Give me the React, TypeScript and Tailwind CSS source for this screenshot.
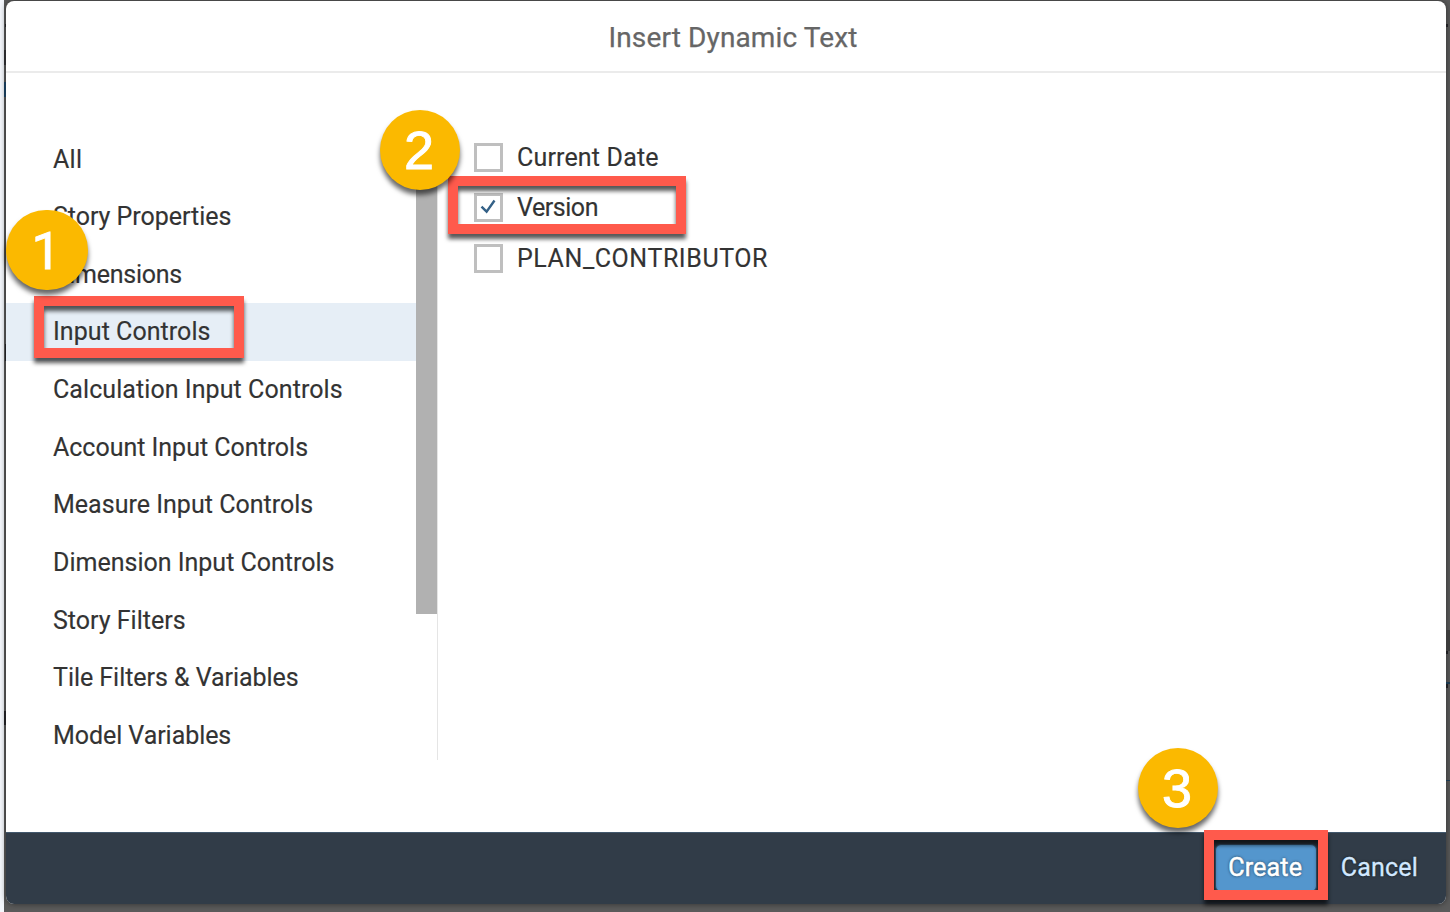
import type { ReactNode } from "react";

const categories = [
  { label: "All", tracking: "tracking-[0.3px]" },
  { label: "Story Properties", tracking: "tracking-[-0.03px]" },
  { label: "Dimensions", tracking: "tracking-[-0.25px]" },
  { label: "Input Controls", tracking: "tracking-[0.05px]", selected: true },
  { label: "Calculation Input Controls", tracking: "tracking-[0.07px]" },
  { label: "Account Input Controls", tracking: "tracking-[-0.02px]" },
  { label: "Measure Input Controls", tracking: "tracking-[0.02px]" },
  { label: "Dimension Input Controls", tracking: "tracking-[0px]" },
  { label: "Story Filters", tracking: "tracking-[0px]" },
  { label: "Tile Filters & Variables", tracking: "tracking-[-0.04px]" },
  { label: "Model Variables", tracking: "tracking-[-0.06px]" },
];

const options = [
  { label: "Current Date", tracking: "tracking-[0.17px]", gap: "mb-[21px]" },
  { label: "Version", tracking: "tracking-[-0.45px]", gap: "mb-[22px]", checked: true },
  { label: "PLAN_CONTRIBUTOR", tracking: "tracking-[0.57px]", gap: "mb-0" },
];

// Slivers of the dimmed page that show beside the dialog.
const slivers = [
  "top-[24px] left-[5px] h-[3px] w-px bg-[#1f1f22]",
  "top-[50px] left-[4px] h-[15px] w-[2px] bg-[#2a2a2d]",
  "top-[82px] left-[4px] h-[15px] w-[2px] bg-[#183a56]",
  "top-[344px] left-[5px] h-[17px] w-px bg-[#1f1f22]",
  "top-[711px] left-[4px] h-[14px] w-[2px] bg-[#1f1f22]",
  "top-[24px] left-[1446px] h-[3px] w-[2px] bg-[#1f1f22]",
  "top-[630px] left-[1446px] h-[21px] w-[4px] bg-[#3c3c3c]",
  "top-[651px] left-[1446px] h-[3px] w-[2px] bg-[#1f1f22]",
  "top-[682px] left-[1446px] h-[2px] w-[4px] bg-[#1c3a50]",
  "top-[684px] left-[1446px] h-[4px] w-[2px] bg-[#1f1f22]",
  "top-[780px] left-[1446px] h-px w-[4px] bg-[#1c3a50]",
];

function Step({ place, children }: { place: string; children: ReactNode }) {
  return (
    <div
      className={`absolute flex h-20 items-center justify-center rounded-full bg-[#fbb900] leading-none text-white shadow-[0_5px_5px_rgba(0,0,0,0.6)] ${place}`}
    >
      <span className="[-webkit-text-stroke:0.9px_white]">{children}</span>
    </div>
  );
}

function Highlight({ place }: { place: string }) {
  return (
    <div
      className={`pointer-events-none absolute border-[10px] border-[#ff5a4c] drop-shadow-[0_5px_2px_rgba(0,0,0,0.65)] ${place}`}
    />
  );
}

export default function App() {
  return (
    <div className="relative flex h-[912px] w-[1450px] overflow-hidden bg-[#f4f7fc] pl-1 font-['Roboto',sans-serif] text-[25px] text-[#333]">
      <div className="flex flex-1 bg-[#5b5b5b] pt-px pr-1 pb-2 pl-0.5">
        <div className="flex flex-1 flex-col overflow-hidden rounded-lg bg-white shadow-[0_0_6px_rgba(0,0,0,0.5)]">
          <header className="flex h-[72px] shrink-0 items-center justify-center border-b-2 border-[#ebebeb] pt-[3px] pl-[14px] text-[28px] text-[#666]">
            <h1 className="tracking-[0.12px] [-webkit-text-stroke:0.25px_#666]">Insert Dynamic Text</h1>
          </header>
          <main className="flex flex-1 pt-[57px]">
            <nav className="flex h-[630px] w-[432px] border-r border-[#e5e5e5]">
              <ul className="w-[410px]">
                {categories.map((c) => (
                  <li
                    key={c.label}
                    className={`flex h-[57.63px] items-center pt-[1.1px] pl-[47px] whitespace-nowrap [-webkit-text-stroke:0.15px_#333] ${c.tracking} ${c.selected ? "bg-[#e6eef6]" : ""}`}
                  >
                    {c.label}
                  </li>
                ))}
              </ul>
              <div className="h-[484px] w-[21px] bg-[#b1b1b1]" />
            </nav>
            <section className="flex flex-col pt-[13px] pl-9">
              {options.map((o) => (
                <label key={o.label} className={`flex h-[29px] items-center gap-[14px] whitespace-nowrap ${o.gap}`}>
                  <span className="flex size-[29px] items-center justify-center border-[3px] border-[#bfbfbf] bg-white">
                    {o.checked && (
                      <svg viewBox="0 0 16 16" className="mr-px mb-1 size-4" fill="none" stroke="#346187" strokeWidth="2.4">
                        <path d="M1.5 8.6 6.6 13.6 14.5 2.5" />
                      </svg>
                    )}
                  </span>
                  <span className={`[-webkit-text-stroke:0.15px_#333] ${o.tracking}`}>{o.label}</span>
                </label>
              ))}
            </section>
          </main>
          <footer className="flex h-[72px] shrink-0 items-center justify-end border-t border-[#42586d] bg-[#313c48] pr-7 pb-0.5">
            <button className="mt-px mr-[24px] flex h-[48px] w-[102px] items-center justify-center rounded-md border border-[#34526d] bg-[#5496cd] pr-px text-white [text-shadow:0_0_3px_rgba(0,0,0,0.7)]">
              <span className="tracking-[0.2px] [-webkit-text-stroke:0.5px_white]">Create</span>
            </button>
            <button className="tracking-[0.2px] text-[#d1e8ff] [-webkit-text-stroke:0.3px_#d1e8ff] [text-shadow:0_0_3px_rgba(0,0,0,0.7)]">
              Cancel
            </button>
          </footer>
        </div>
      </div>
      {slivers.map((s) => (
        <div key={s} className={`absolute ${s}`} />
      ))}
      <Highlight place="top-[296px] left-[34px] h-[62px] w-[210px]" />
      <Highlight place="top-[176px] left-[448px] h-[58px] w-[238px]" />
      <Highlight place="top-[830px] left-[1204px] h-[70px] w-[124px]" />
      <Step place="top-[210px] left-[6px] w-[82px] pt-[3px] pr-0.5 font-['Roboto'] text-[52px]">1</Step>
      <Step place="top-[110px] left-[380px] w-20 pr-0.5 font-['Liberation_Sans'] text-[54px]">2</Step>
      <Step place="top-[748px] left-[1138px] w-20 pr-0.5 font-['Liberation_Sans'] text-[54px]">3</Step>
    </div>
  );
}
